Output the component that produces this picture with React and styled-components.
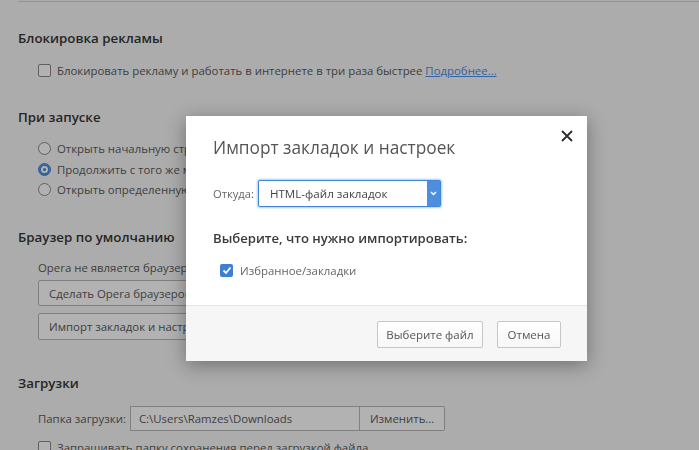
import styled, { createGlobalStyle } from "styled-components";

const GlobalStyle = createGlobalStyle`
  html, body {
    margin: 0;
    padding: 0;
    background: #f7f7f7;
    font-family: "Open Sans", "Noto Sans", "DejaVu Sans", sans-serif;
    overflow: hidden;
  }
`;

const Page = styled.div`
  padding: 0 0 0 18px;
  width: 699px;
  height: 450px;
  box-sizing: border-box;
  color: #5a5a5a;
  font-size: 11.4px;
`;

const Divider = styled.div`
  height: 1px;
  margin-top: 1px;
  background: #d4d4d4;
`;

const SectionTitle = styled.h2`
  margin: ${(p) => p.$top || 27}px 0 0;
  font-size: 13.3px;
  font-weight: 600;
  line-height: 20px;
  color: #363636;
`;

const Group = styled.div`
  margin-top: ${(p) => p.$top || 11}px;
  padding-left: 20px;
  display: flex;
  flex-direction: column;
`;

const OptionRow = styled.label`
  display: flex;
  align-items: center;
  gap: 6px;
  height: ${(p) => p.$h || 20}px;
  margin-top: ${(p) => p.$top || 0}px;
  white-space: nowrap;
`;

const Box = styled.span`
  width: 11px;
  height: 11px;
  border: 1px solid #8a8a8a;
  border-radius: 2px;
  background: #fff;
  flex-shrink: 0;
`;

const Radio = styled.span`
  width: 11px;
  height: 11px;
  border-radius: 50%;
  flex-shrink: 0;
  box-sizing: content-box;
  border: 1px solid ${(p) => (p.$on ? "#3a7bd0" : "#8a8a8a")};
  background: #fff;
  box-shadow: ${(p) => (p.$on ? "inset 0 0 0 2px #4b8de0, inset 0 0 0 4px #fff, inset 0 0 0 6px #3b7fd6" : "none")};
`;

const Link = styled.a`
  color: #4a8ee6;
  text-decoration: underline;
`;

const Note = styled.div`
  height: 20px;
  line-height: 20px;
`;

const PlainButton = styled.button`
  font-family: inherit;
  font-size: 11.4px;
  color: #5a5a5a;
  background: #fff;
  border: 1px solid #b8b8b8;
  border-radius: 2px;
  height: ${(p) => p.$h || 26}px;
  padding: 0 10px;
  margin-top: ${(p) => p.$top || 0}px;
  align-self: flex-start;
  text-align: left;
  white-space: nowrap;
  width: ${(p) => (p.$w ? p.$w + "px" : "auto")};
`;

const PathRow = styled.div`
  display: flex;
  align-items: center;
  height: 25px;
`;

const PathLabel = styled.span`
  margin-right: 4px;
`;

const PathInput = styled.div`
  width: 230px;
  height: 25px;
  box-sizing: border-box;
  border: 1px solid #b8b8b8;
  background: #fff;
  padding: 0 8px;
  line-height: 23px;
`;

const SideButton = styled(PlainButton)`
  height: 25px;
  border-left: none;
  border-radius: 0 2px 2px 0;
  width: 85px;
  padding: 0 10px;
`;

const Overlay = styled.div`
  position: fixed;
  inset: 0;
  background: rgba(0, 0, 0, 0.3);
`;

const Dialog = styled.div`
  position: fixed;
  left: 186px;
  top: 116px;
  width: 401px;
  height: 245px;
  background: #fff;
  box-shadow: 0 4px 18px rgba(0, 0, 0, 0.35);
  display: flex;
  flex-direction: column;
  color: #555;
`;

const DialogBody = styled.div`
  flex: 1;
  padding: 20px 27px 0;
  display: flex;
  flex-direction: column;
`;

const DialogTitle = styled.h1`
  margin: 0;
  font-size: 17.3px;
  font-weight: 400;
  line-height: 24px;
  color: #555;
`;

const Close = styled.button`
  position: absolute;
  right: 12px;
  top: 12px;
  width: 16px;
  height: 16px;
  padding: 0;
  border: none;
  background: none;
  display: flex;
  align-items: center;
  justify-content: center;
`;

const FromRow = styled.div`
  margin-top: 20px;
  display: flex;
  align-items: center;
  height: 27px;
  font-size: 11.2px;
  color: #666;
`;

const Select = styled.div`
  margin-left: 4px;
  width: 183px;
  height: 27px;
  box-sizing: border-box;
  border: 1px solid #3f86dc;
  border-radius: 2px;
  box-shadow: 0 0 2px 1px rgba(70, 140, 230, 0.45);
  display: flex;
  align-items: stretch;
  background: #fff;
`;

const SelectValue = styled.span`
  flex: 1;
  padding-left: 11px;
  line-height: 25px;
  font-size: 11.6px;
  color: #444;
`;

const SelectArrow = styled.span`
  width: 13px;
  background: #4d8fdc;
  display: flex;
  align-items: center;
  justify-content: center;
`;

const Question = styled.h3`
  margin: 21px 0 0;
  font-size: 13.1px;
  font-weight: 600;
  line-height: 20px;
  color: #3a3a3a;
`;

const CheckRow = styled.label`
  margin-top: 12px;
  padding-left: 7px;
  display: flex;
  align-items: center;
  gap: 7px;
  height: 20px;
  font-size: 11.4px;
  color: #666;
`;

const Checked = styled.span`
  width: 13px;
  height: 13px;
  border-radius: 2px;
  background: #3d7fd4;
  display: flex;
  align-items: center;
  justify-content: center;
`;

const Footer = styled.div`
  height: 56px;
  box-sizing: border-box;
  border-top: 1px solid #e4e4e4;
  background: #f6f6f6;
  display: flex;
  justify-content: flex-end;
  align-items: flex-start;
  gap: 14px;
  padding: 15px 26px 0 0;
`;

const FooterButton = styled.button`
  font-family: inherit;
  font-size: 11.5px;
  color: #555;
  height: 27px;
  width: ${(p) => p.$w}px;
  background: linear-gradient(#fff, #f7f7f7);
  border: 1px solid #c6c6c6;
  border-radius: 2px;
  padding: 0;
`;

export default function App() {
  return (
    <>
      <GlobalStyle />
      <Page>
        <Divider />

        <SectionTitle $top={26}>Блокировка рекламы</SectionTitle>
        <Group $top={12}>
          <OptionRow>
            <Box />
            <span>
              Блокировать рекламу и работать в интернете в три раза быстрее{" "}
              <Link>Подробнее...</Link>
            </span>
          </OptionRow>
        </Group>

        <SectionTitle>При запуске</SectionTitle>
        <Group>
          <OptionRow $h={21}>
            <Radio />
            Открыть начальную страницу
          </OptionRow>
          <OptionRow $h={20}>
            <Radio $on />
            Продолжить с того же места
          </OptionRow>
          <OptionRow $h={20}>
            <Radio />
            Открыть определенную страницу или несколько страниц
          </OptionRow>
        </Group>

        <SectionTitle $top={28}>Браузер по умолчанию</SectionTitle>
        <Group>
          <Note>Opera не является браузером по умолчанию.</Note>
          <PlainButton $top={2} $w={240}>Сделать Opera браузером по умолчанию</PlainButton>
          <PlainButton $top={7} $h={27} $w={240}>Импорт закладок и настроек</PlainButton>
        </Group>

        <SectionTitle $top={33}>Загрузки</SectionTitle>
        <Group $top={13}>
          <PathRow>
            <PathLabel>Папка загрузки:</PathLabel>
            <PathInput>C:\Users\Ramzes\Downloads</PathInput>
            <SideButton>Изменить...</SideButton>
          </PathRow>
          <OptionRow $top={6}>
            <Box />
            Запрашивать папку сохранения перед загрузкой файла
          </OptionRow>
        </Group>
      </Page>

      <Overlay />

      <Dialog>
        <Close aria-label="Закрыть">
          <svg width="12" height="12" viewBox="0 0 12 12">
            <path d="M1 1L11 11M11 1L1 11" stroke="#2b2b2b" strokeWidth="1.8" />
          </svg>
        </Close>
        <DialogBody>
          <DialogTitle>Импорт закладок и настроек</DialogTitle>
          <FromRow>
            Откуда:
            <Select>
              <SelectValue>HTML-файл закладок</SelectValue>
              <SelectArrow>
                <svg width="7" height="5" viewBox="0 0 7 5">
                  <path d="M1 1L3.5 3.5L6 1" stroke="#fff" strokeWidth="1.4" fill="none" />
                </svg>
              </SelectArrow>
            </Select>
          </FromRow>
          <Question>Выберите, что нужно импортировать:</Question>
          <CheckRow>
            <Checked>
              <svg width="10" height="9" viewBox="0 0 10 9">
                <path d="M1.5 4.5L4 7L8.5 1.5" stroke="#fff" strokeWidth="1.8" fill="none" />
              </svg>
            </Checked>
            Избранное/закладки
          </CheckRow>
        </DialogBody>
        <Footer>
          <FooterButton $w={106}>Выберите файл</FooterButton>
          <FooterButton $w={64}>Отмена</FooterButton>
        </Footer>
      </Dialog>
    </>
  );
}
